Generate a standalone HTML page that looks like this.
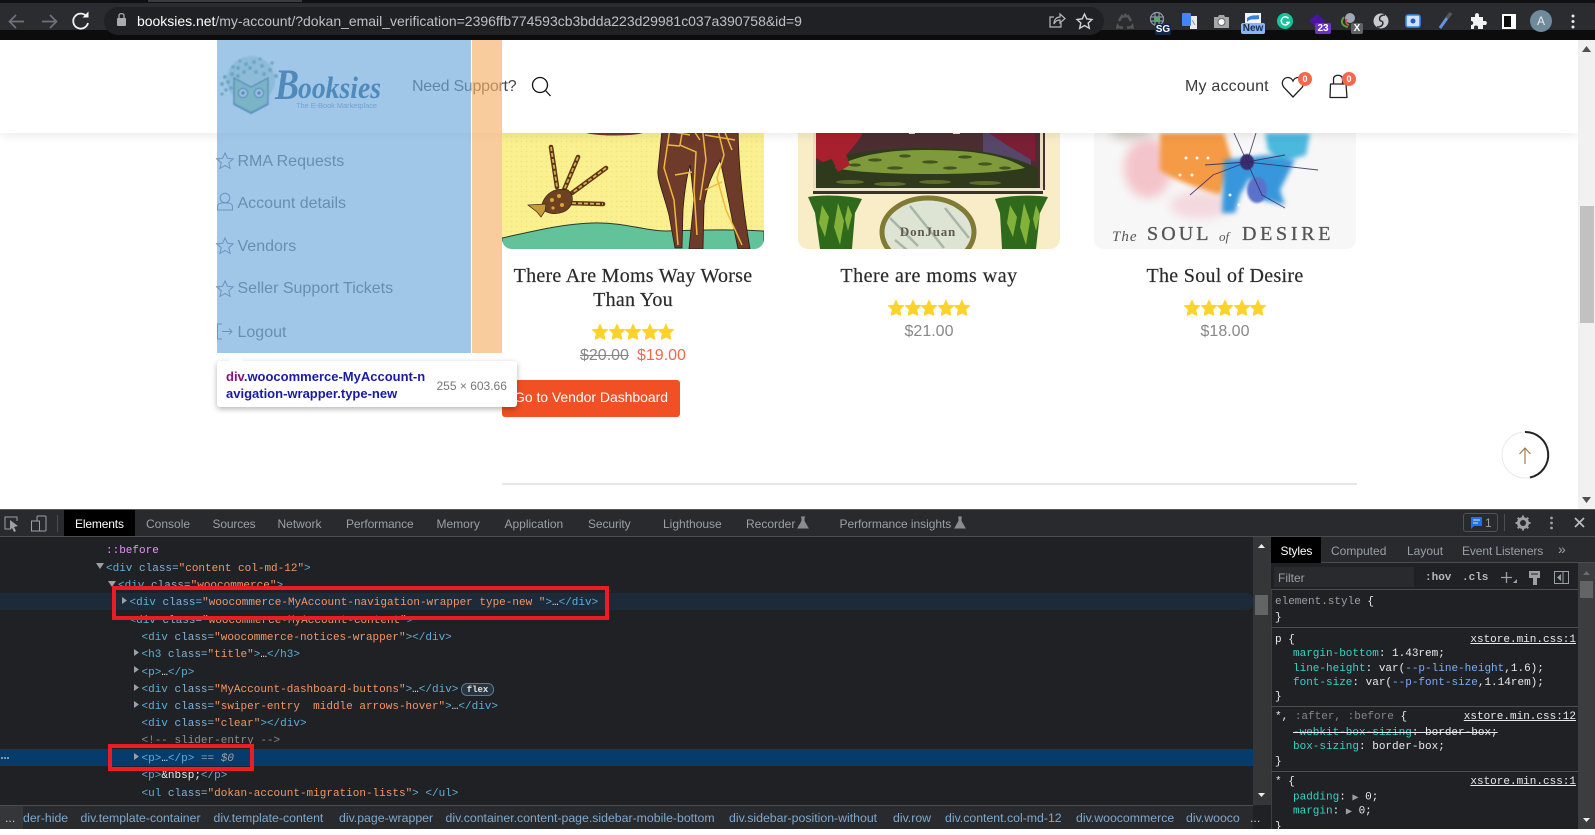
<!DOCTYPE html>
<html lang="en"><head><meta charset="utf-8"><title>booksies.net my-account</title>
<style>
*{box-sizing:border-box}
html,body{margin:0;padding:0;width:1595px;height:829px;overflow:hidden;background:#fff;font-family:"Liberation Sans",sans-serif}
.x{position:absolute;white-space:pre;line-height:16px;transform:translateY(-50%)}
.c{transform:translate(-50%,-50%);text-align:center}
.b{position:absolute}
svg{position:absolute;overflow:visible}
.m{font-family:"Liberation Mono",monospace;font-size:11px;white-space:pre;margin-top:1.3px}
.t{color:#5db0d7}.a{color:#7fb3d9}.v{color:#f29766}
.tab{font-size:12px;color:#9aa0a6}
.s{font-family:"Liberation Mono",monospace;font-size:11px;color:#e8eaed;margin-top:1.7px}
.p{color:#35d4c7}
.l{text-decoration:underline}
.bc{font-size:12.3px;color:#7fa9cd}
.title{font-family:"Liberation Serif",serif;font-size:20px;color:#2b2b2b;letter-spacing:.25px;-webkit-text-stroke:.2px #2b2b2b}
.pr{font-size:16px;color:#888;margin-top:1px}
.menu{font-size:16px;color:#585858;margin-top:1px}
.badge{position:absolute;width:14px;height:14px;border-radius:50%;background:#f4694c;color:#fff;font-size:9px;font-weight:bold;text-align:center;line-height:14px}
.ext{position:absolute;border-radius:2px;color:#fff;font-size:10px;font-weight:bold;text-align:center;line-height:11px;height:11px}
</style></head><body>

<!-- PAGE -->
<div class="b" style="left:0;top:40px;width:1578px;height:469px;background:#fff"></div>

<!-- product images -->
<svg style="left:0;top:0" width="1595" height="829" viewBox="0 0 1595 829">
<defs>
<clipPath id="c1"><path d="M502 120H764V239a10 10 0 0 1-10 10H512a10 10 0 0 1-10-10Z"/></clipPath>
<clipPath id="c2"><path d="M798 120H1060V239a10 10 0 0 1-10 10H808a10 10 0 0 1-10-10Z"/></clipPath>
<clipPath id="c3"><path d="M1094 120H1356V239a10 10 0 0 1-10 10H1104a10 10 0 0 1-10-10Z"/></clipPath>
<filter id="bl2" x="-30%" y="-30%" width="160%" height="160%"><feGaussianBlur stdDeviation="2.500"/></filter>
<filter id="bl4" x="-50%" y="-50%" width="200%" height="200%"><feGaussianBlur stdDeviation="5"/></filter>
<filter id="bl1"><feGaussianBlur stdDeviation="1"/></filter>
<filter id="bl05"><feGaussianBlur stdDeviation=".5"/></filter>
<pattern id="dots" width="5" height="5" patternUnits="userSpaceOnUse"><circle cx="1.500" cy="1.500" r=".8" fill="#e8d86e"/></pattern>
</defs>

<!-- giraffe -->
<g clip-path="url(#c1)">
<rect x="502" y="120" width="262" height="130" fill="#faf08f"/>
<rect x="502" y="120" width="262" height="130" fill="url(#dots)" opacity=".6"/>
<path d="M502 238C530 232 560 224 592 223C625 222 645 231 665 231C700 230 730 229 764 231V250H502Z" fill="#62c29a" stroke="#2b3a2a" stroke-width="1"/>
<!-- big giraffe -->
<path d="M560 120C572 134 600 137 630 135C645 134 655 130 660 120Z" fill="#6e3a2a"/>
<path d="M663 120L658 170C657 180 664 195 669 215L675 248L682 248L683 210C685 185 688 172 690 165L694 200L689 249L703 249L704 205C708 178 716 170 720 160C726 185 732 220 738 249L750 249C745 220 738 170 738 120Z" fill="#6e3a2a" stroke="#2a1a12" stroke-width=".8"/>
<g fill="none" stroke="#efb93e" stroke-width="1.500">
<path d="M670 128L664 168L674 200L678 245"/><path d="M684 122L680 145L696 152L694 190L697 235"/><path d="M702 125L706 160L700 200"/><path d="M716 122L724 155L717 178L726 210L742 245"/><path d="M668 145L680 146M675 175L692 172M705 190L722 182M650 128L690 135M705 135L735 140M690 125L700 140M724 130L732 150"/>
</g>
<!-- baby giraffe -->
<g fill="none" stroke="#5a3518" stroke-width="4.600" stroke-linecap="round"><path d="M551 147L557 187"/><path d="M578 157L564 190"/><path d="M606 168L572 193"/><path d="M566 203L603 204"/></g>
<g fill="none" stroke="#dcae46" stroke-width="1.800" stroke-dasharray="4 2"><path d="M551 147L557 187"/><path d="M578 157L564 190"/><path d="M606 168L572 193"/><path d="M566 203L603 204"/></g>
<path d="M541 208C544 193 555 187 568 190C576 197 572 209 563 212C555 215 547 214 541 208Z" fill="#6e4220" stroke="#3a2413" stroke-width=".7"/>
<g fill="#d9a43a"><circle cx="552" cy="200" r="2"/><circle cx="559" cy="196" r="2"/><circle cx="562" cy="205" r="2"/><circle cx="553" cy="208" r="1.600"/></g>
<path d="M546 204L528 205L537 212L541 217L545 211Z" fill="#c79a3c" stroke="#3a2413" stroke-width=".7"/>
</g>

<!-- Don Juan -->
<g clip-path="url(#c2)">
<rect x="798" y="120" width="262" height="130" fill="#f9edc8"/>
<rect x="813" y="120" width="232" height="70" fill="#4c2e32"/>
<rect x="983" y="120" width="48" height="45" fill="#55466a"/>
<path d="M816 120H868C862 140 850 150 842 160L835 170C828 165 820 160 816 158Z" fill="#a8202e"/>
<path d="M985 120H1035V162C1018 152 998 140 985 130Z" fill="#7a1f35"/>
<path d="M816 190V165C850 150 890 148 925 148C965 148 1005 152 1038 168V190Z" fill="#2f3a1c"/>
<path d="M835 168C860 152 900 150 925 150C960 150 1000 152 1025 168C990 176 870 176 835 168Z" fill="#7f9a3a"/>
<g fill="#3a4a1e" opacity=".85"><ellipse cx="855" cy="165" rx="6" ry="1.600"/><ellipse cx="875" cy="160" rx="7" ry="1.600"/><ellipse cx="895" cy="168" rx="8" ry="1.600"/><ellipse cx="905" cy="156" rx="6" ry="1.600"/><ellipse cx="930" cy="162" rx="8" ry="1.600"/><ellipse cx="950" cy="168" rx="7" ry="1.600"/><ellipse cx="965" cy="157" rx="7" ry="1.600"/><ellipse cx="985" cy="164" rx="7" ry="1.600"/><ellipse cx="1005" cy="168" rx="6" ry="1.600"/></g>
<g fill="#5d6d2c"><ellipse cx="850" cy="182" rx="14" ry="2"/><ellipse cx="890" cy="184" rx="16" ry="2"/><ellipse cx="935" cy="182" rx="16" ry="2"/><ellipse cx="985" cy="183" rx="16" ry="2"/></g>
<path d="M865 120h16l-8 12ZM905 120h8l2 14h-6ZM950 120h8l2 14h-7Z" fill="#e8dfd0"/>
<path d="M840 140L850 165L838 172L830 155Z" fill="#a8202e"/>
<rect x="813" y="120" width="3" height="68" fill="#e9dfc0"/><rect x="1040" y="120" width="3" height="68" fill="#e9dfc0"/>
<rect x="813" y="188" width="230" height="3" fill="#eee6cf"/>
<rect x="813" y="191" width="230" height="3" fill="#3a3328"/>
<path d="M808 197C825 194 850 196 862 199L855 213L852 249H820L815 213Z" fill="#2f6a1c"/>
<path d="M995 199C1010 195 1035 195 1048 197L1040 213L1036 249H1002L1000 213Z" fill="#2f6a1c"/>
<g fill="#93bd3e" opacity=".85"><path d="M822 205l7 12-4 20-6-14ZM838 203l6 18-4 24-6-18ZM848 205l4 10-4 16-3-12ZM1010 205l7 12-4 20-6-14ZM1024 203l6 18-4 24-6-18ZM1036 205l4 10-4 16-3-12Z"/></g>
<ellipse cx="928" cy="232" rx="46" ry="34" fill="#dde4d4" stroke="#7f7a34" stroke-width="5"/>
<path d="M890 218l28 28M910 206l34 42M945 208l24 30M895 240l12 10" stroke="#a8b5a8" stroke-width="2.500"/>
<text x="928" y="236" text-anchor="middle" font-family="Liberation Serif,serif" font-size="13" font-weight="bold" fill="#5e5a4c" letter-spacing=".8">DonJuan</text>
</g>

<!-- Soul of desire -->
<g clip-path="url(#c3)">
<rect x="1094" y="120" width="262" height="130" fill="#f7f7f7"/>
<ellipse cx="1148" cy="168" rx="24" ry="30" fill="#f3bcc2" filter="url(#bl4)" opacity=".85"/>
<ellipse cx="1130" cy="132" rx="20" ry="8" fill="#d8cfc8" filter="url(#bl4)"/>
<ellipse cx="1200" cy="205" rx="30" ry="14" fill="#f3ccd4" filter="url(#bl4)" opacity=".7"/>
<path d="M1160 133H1224L1232 160L1220 195C1205 190 1172 180 1160 170Z" fill="#f59a44" filter="url(#bl2)"/>
<path d="M1265 133H1310L1306 155L1280 163L1268 150Z" fill="#4bb8de" filter="url(#bl2)"/>
<path d="M1224 160L1268 155L1295 160L1280 190L1285 205L1262 200L1250 178L1240 195L1235 213L1222 213Z" fill="#3797dc" filter="url(#bl2)"/>
<ellipse cx="1257" cy="190" rx="10" ry="13" fill="#5a72cc" filter="url(#bl1)"/>
<ellipse cx="1247" cy="162" rx="7" ry="8" fill="#3a2d70" filter="url(#bl05)"/>
<g stroke="#2f2a5e" stroke-width=".9" fill="none" opacity=".85"><path d="M1247 162L1234 133M1247 162L1256 133M1247 162L1285 155M1247 162L1318 170M1247 162L1213 175L1190 195M1247 162L1262 195L1285 208M1247 162L1205 165"/></g>
<g fill="#fff" opacity=".9"><circle cx="1186" cy="158" r="1.500"/><circle cx="1197" cy="158" r="1.500"/><circle cx="1208" cy="158" r="1.500"/><circle cx="1180" cy="175" r="1.500"/><circle cx="1192" cy="175" r="1.500"/><circle cx="1230" cy="195" r="1.500"/><circle cx="1239" cy="205" r="1.500"/></g>
<text x="1112" y="241" font-family="Liberation Serif,serif" font-style="italic" font-size="15" fill="#555" letter-spacing="1">The</text>
<text x="1147" y="240" font-family="Liberation Serif,serif" font-size="20" fill="#555" stroke="#555" stroke-width=".3" letter-spacing="3.100">SOUL</text>
<text x="1219" y="241" font-family="Liberation Serif,serif" font-style="italic" font-size="13" fill="#555">of</text>
<text x="1242" y="240" font-family="Liberation Serif,serif" font-size="20" fill="#555" stroke="#555" stroke-width=".3" letter-spacing="3.700">DESIRE</text>
</g>
</svg>

<!-- titles / prices -->
<div class="x c title" style="left:633px;top:276px">There Are Moms Way Worse</div>
<div class="x c title" style="left:633px;top:300px">Than You</div>
<div class="x c title" style="left:929px;top:276px;letter-spacing:.5px">There are moms way</div>
<div class="x c title" style="left:1225px;top:276px;letter-spacing:.3px">The Soul of Desire</div>

<svg style="left:0;top:0" width="1595" height="829">
<defs><path id="st" d="M0-8L2.300-3L7.900-2.400L3.800 1.500L5 7.200C3.600 7.900 1.400 5.300 0 5.300C-1.400 5.300-3.600 7.900-5 7.200L-3.800 1.500L-7.900-2.400L-2.300-3Z" fill="#fdd22a" stroke="#fdd22a" stroke-width=".6" stroke-linejoin="round"/></defs>
<g><use href="#st" x="600" y="332"/><use href="#st" x="617" y="332"/><use href="#st" x="633" y="332"/><use href="#st" x="650" y="332"/><use href="#st" x="666" y="332"/></g>
<g><use href="#st" x="896" y="308"/><use href="#st" x="913" y="308"/><use href="#st" x="929" y="308"/><use href="#st" x="946" y="308"/><use href="#st" x="962" y="308"/></g>
<g><use href="#st" x="1192" y="308"/><use href="#st" x="1209" y="308"/><use href="#st" x="1225" y="308"/><use href="#st" x="1242" y="308"/><use href="#st" x="1258" y="308"/></g>
</svg>
<div class="x pr" style="left:580px;top:355px;text-decoration:line-through">$20.00</div>
<div class="x pr" style="left:637px;top:355px;color:#f2674c">$19.00</div>
<div class="x c pr" style="left:929px;top:331px">$21.00</div>
<div class="x c pr" style="left:1225px;top:331px">$18.00</div>

<div class="b" style="left:502px;top:380px;width:178px;height:37px;background:#f05023;border-radius:3px"></div>
<div class="x" style="left:514px;top:397px;font-size:14px;color:#fff;letter-spacing:-.04px">Go to Vendor Dashboard</div>

<div class="b" style="left:502px;top:483px;width:855px;height:1.500px;background:#e6e6e6"></div>

<!-- scroll to top -->
<svg style="left:0;top:0" width="1595" height="829">
<circle cx="1525" cy="455" r="23" fill="#fff" stroke="#e9e9e9" stroke-width="1"/>
<path d="M1525 432A23 23 0 0 1 1530 477.500" fill="none" stroke="#222" stroke-width="2"/>
<path d="M1525 464V448M1519.500 454L1525 448L1530.500 454" fill="none" stroke="#a57a4c" stroke-width="1.200"/>
</svg>

<!-- menu items -->
<svg style="left:0;top:0" width="1595" height="829" fill="none" stroke="#5d6f88" stroke-width="1">
<defs><path id="os" d="M0-8L2.400-2.700L8.200-2.100L3.800 1.700L5.100 7.400L0 4.400L-5.100 7.400L-3.800 1.700L-8.200-2.100L-2.400-2.700Z"/></defs>
<use href="#os" x="225" y="161"/><use href="#os" x="225" y="246"/><use href="#os" x="225" y="289"/>
<circle cx="225" cy="198" r="4.800"/><path d="M217.500 210V207C217.500 204 220 203 222 203H228C230 203 232.500 204 232.500 207V210Z"/>
<path d="M222 324H217.500V339H222" stroke="#8a6a3a"/><path d="M222 331.500H232M229 328.500L232 331.500L229 334.500"/>
</svg>
<div class="x menu" style="left:237.500px;top:161px">RMA Requests</div>
<div class="x menu" style="left:237.500px;top:203px">Account details</div>
<div class="x menu" style="left:237.500px;top:246px">Vendors</div>
<div class="x menu" style="left:237.500px;top:288px">Seller Support Tickets</div>
<div class="x menu" style="left:237.500px;top:332px">Logout</div>

<!-- HEADER -->
<div class="b" style="left:0;top:40px;width:1578px;height:93px;background:#fff;box-shadow:0 2px 10px rgba(0,0,0,.09)"></div>
<svg style="left:0;top:0" width="1595" height="829">
<!-- logo -->
<g filter="url(#bl05)">
<circle cx="251" cy="80" r="24" fill="#9cc7a8" opacity=".55"/>
<g fill="#3f8f76" opacity=".75"><circle cx="222" cy="84" r="2"/><circle cx="225" cy="77" r="2"/><circle cx="228" cy="82" r="2"/><circle cx="232" cy="74" r="2.200"/><circle cx="238" cy="68" r="2"/><circle cx="233" cy="67" r="1.800"/><circle cx="246" cy="64" r="2"/><circle cx="254" cy="62" r="2"/><circle cx="262" cy="66" r="2"/><circle cx="270" cy="70" r="2"/><circle cx="276" cy="76" r="2"/><circle cx="272" cy="63" r="1.800"/><circle cx="226" cy="90" r="1.800"/><circle cx="231" cy="88" r="1.800"/><circle cx="244" cy="72" r="2"/><circle cx="256" cy="72" r="2"/><circle cx="250" cy="68" r="2"/><circle cx="264" cy="74" r="2"/><circle cx="238" cy="76" r="2"/><circle cx="222" cy="94" r="1.600"/><circle cx="240" cy="61" r="1.600"/><circle cx="260" cy="59" r="1.600"/></g>
<path d="M234 78L251 87L268 78V104L251 113L234 104Z" fill="#8fc99a" stroke="#2f6488" stroke-width="1.500"/>
<path d="M234 104L251 113L268 104" fill="none" stroke="#2f6488" stroke-width="2"/>
<circle cx="243" cy="93" r="4.500" fill="#fff" stroke="#2f6488" stroke-width="1.500"/><circle cx="243" cy="93" r="2" fill="#1f5478"/>
<circle cx="259" cy="93" r="4.500" fill="#fff" stroke="#2f6488" stroke-width="1.500"/><circle cx="259" cy="93" r="2" fill="#1f5478"/>
</g>
<text x="275" y="99" font-family="Liberation Serif,serif" font-style="italic" font-weight="bold" font-size="43" fill="#12507c" textLength="24" lengthAdjust="spacingAndGlyphs">B</text>
<text x="298" y="98" font-family="Liberation Serif,serif" font-style="italic" font-weight="bold" font-size="31" fill="#12507c" textLength="83" lengthAdjust="spacingAndGlyphs">ooksies</text>
<text x="296" y="108" font-family="Liberation Sans,sans-serif" font-size="7.500" fill="#7e97a8" textLength="81" lengthAdjust="spacingAndGlyphs">The E-Book Marketplace</text>
<!-- search -->
<g fill="none" stroke="#111" stroke-width="1.300"><circle cx="540" cy="85" r="7.500"/><path d="M545.500 90.500L550.500 96"/></g>
<!-- heart -->
<path d="M1293 97L1284 87.500C1280 82 1284 77.500 1288 77.500C1290.500 77.500 1292 79 1293 81C1294 79 1295.500 77.500 1298 77.500C1302 77.500 1306 82 1302 87.500Z" fill="#fff" stroke="#222" stroke-width="1.300"/>
<!-- bag -->
<path d="M1330.500 84H1346L1347 97.500H1330Z" fill="#fff" stroke="#222" stroke-width="1.300" stroke-linejoin="round"/>
<path d="M1333.500 84V79C1333.500 74 1342.500 74 1342.500 79V84" fill="none" stroke="#222" stroke-width="1.300"/>
</svg>
<div class="x" style="left:412px;top:86.500px;font-size:16px;color:#444;letter-spacing:-.25px">Need Support?</div>
<div class="x" style="left:1185px;top:86.500px;font-size:16px;color:#3a3a3a;letter-spacing:.2px">My account</div>
<div class="badge" style="left:1298px;top:72px">0</div>
<div class="badge" style="left:1342px;top:72px">0</div>

<!-- inspector highlight -->
<div class="b" style="left:217px;top:40px;width:254px;height:313px;background:rgba(111,168,220,.66)"></div>
<div class="b" style="left:471px;top:40px;width:1px;height:313px;background:rgba(255,255,255,.6)"></div>
<div class="b" style="left:472px;top:40px;width:30px;height:313px;background:rgba(246,178,107,.66)"></div>

<!-- tooltip -->
<div class="b" style="left:217px;top:361px;width:300px;height:46px;background:#fff;border-radius:3px;box-shadow:0 2px 6px rgba(0,0,0,.3)"></div>
<div class="b" style="left:229px;top:354px;width:0;height:0;border-left:7px solid transparent;border-right:7px solid transparent;border-bottom:7px solid #fff"></div>
<div class="x" style="left:226px;top:376.500px;font-size:13px;font-weight:bold;color:#1a1aa6"><span style="color:#881280">div</span>.woocommerce-MyAccount-n</div>
<div class="x" style="left:226px;top:394px;font-size:13px;font-weight:bold;color:#1a1aa6">avigation-wrapper.type-new</div>
<div class="x" style="left:436.500px;top:386px;font-size:12px;color:#777">255 × 603.66</div>

<!-- page scrollbar -->
<div class="b" style="left:1578px;top:40px;width:17px;height:469px;background:#f1f1f1"></div>
<div class="b" style="left:1580px;top:206px;width:14px;height:117px;background:#c1c1c1"></div>
<svg style="left:0;top:0" width="1595" height="829"><path d="M1586.500 46L1591 52H1582Z" fill="#505050"/><path d="M1586.500 503L1591 497H1582Z" fill="#505050"/></svg>

<!-- CHROME BAR -->
<div class="b" style="left:0;top:0;width:1595px;height:40px;background:#2b2c2f"></div>
<div class="b" style="left:0;top:0;width:1595px;height:2.500px;background:#101012"></div>
<div class="b" style="left:148px;top:0;width:154px;height:2px;background:#3a3b3e"></div>
<div class="b" style="left:0;top:30px;width:1595px;height:10px;background:#0c0c0d"></div>
<div class="b" style="left:104px;top:7px;width:1000px;height:28px;background:#202124;border-radius:14px"></div>
<svg style="left:0;top:0" width="1595" height="42" fill="none">
<g stroke="#6f7276" stroke-width="1.700"><path d="M24 21.500H10M16 15L9.500 21.500L16 28"/><path d="M42 21.500H56M50 15L56.500 21.500L50 28"/></g>
<path d="M87 17A7.500 7.500 0 1 0 88 23" stroke="#f1f3f4" stroke-width="1.800"/><path d="M82.500 17.500H88.500V11.500Z" fill="#f1f3f4"/>
<rect x="117" y="18" width="9" height="8" rx="1" fill="#a8abae"/><path d="M119 18V15.500C119 13 124 13 124 15.500V18" stroke="#a8abae" stroke-width="1.300"/>
<g stroke="#b6b8ba" stroke-width="1.200"><path d="M1054 17H1050V27H1061V23"/><path d="M1054 24C1054 19 1057 17 1060 17V14L1065 18.500L1060 23V20C1057 20 1055.500 21 1054 24Z"/></g>
<path d="M1084.500 14L1086.700 18.800L1092 19.500L1088.200 23L1089.300 28.200L1084.500 25.500L1079.700 28.200L1080.800 23L1077 19.500L1082.300 18.800Z" stroke="#d0d2d4" stroke-width="1.400"/>
<!-- recycle -->
<g stroke="#55575a" stroke-width="2.600"><path d="M1122.500 15L1119 21M1127.500 15L1131 21M1120 27.500H1123M1127 27.500H1130"/></g><path d="M1125 13L1129 17L1122 18ZM1117 23L1121 28L1116 29ZM1133 23L1129 28L1134 29Z" fill="#55575a"/>
<!-- grid globe -->
<circle cx="1157" cy="19" r="6.500" stroke="#8a97a8" stroke-width="1.200"/><path d="M1150 17H1164M1150 21H1164M1155 12V26M1159 12V26" stroke="#8a97a8" stroke-width="1.200"/><rect x="1154" y="17" width="6" height="5" fill="#4fae63"/>
<!-- translate -->
<rect x="1190" y="16" width="7" height="13" fill="#e8eaed"/><rect x="1182" y="13" width="9" height="13" rx="1" fill="#4285f4"/><path d="M1192 20L1195 25" stroke="#8f9296"/>
<!-- camera -->
<path d="M1214 17H1218L1219 15H1224L1225 17H1229V28H1214Z" fill="#a5a7a9"/><circle cx="1221.500" cy="22" r="3.500" fill="#fff" stroke="#66686a"/>
<!-- new s -->
<rect x="1245" y="13" width="16" height="10" fill="#f2f5fb"/><path d="M1247 18C1252 14 1256 16 1259 15V19C1254 20 1250 18 1247 22Z" fill="#3b7fd8"/>
<!-- grammarly -->
<circle cx="1285" cy="21" r="8" fill="#15c39a"/><path d="M1288.500 18.500A4 4 0 1 0 1289 22.500H1286" stroke="#fff" stroke-width="1.500"/>
<!-- diamond -->
<path d="M1317 14L1325 21L1317 28L1309 21Z" fill="#4a14a8"/>
<!-- globe -->
<circle cx="1350" cy="18" r="5" fill="#9ca9b6"/><path d="M1344 17C1340 22 1342 26 1348 27" stroke="#5e9d3c" stroke-width="2"/><path d="M1347 19C1345 22 1346 24 1349 25" stroke="#c6603c" stroke-width="1.500"/>
<!-- S -->
<circle cx="1381" cy="21" r="7.500" fill="#c8cacc"/><path d="M1385 15C1378 15 1379 21 1381 21C1384 21 1384 27 1377 27" stroke="#2b2c2f" stroke-width="1.500"/>
<!-- blue rect -->
<rect x="1406" y="15" width="14" height="12" rx="2" stroke="#3a86ee" stroke-width="1.600" fill="#cfe2fb"/><circle cx="1413" cy="21" r="2.500" fill="#2456c8"/>
<!-- pen -->
<path d="M1440 28L1447 18" stroke="#6b8fe0" stroke-width="3"/><path d="M1447 18L1451 13" stroke="#55575a" stroke-width="3.500"/>
<!-- puzzle -->
<path d="M1471 17H1475V15C1475 12.500 1479 12.500 1479 15V17H1483V21H1485C1487.500 21 1487.500 25 1485 25H1483V29H1478V27C1478 25 1474 25 1474 27V29H1471V25C1474 25 1474 21 1471 21Z" fill="#f1f3f4"/>
<!-- square -->
<rect x="1503" y="15" width="12" height="13" fill="#0c0c0d" stroke="#fff" stroke-width="2"/><rect x="1511" y="15" width="4" height="13" fill="#fff"/>
<circle cx="1541" cy="21" r="11" fill="#6f8a9a"/>
<g fill="#e8eaed"><circle cx="1573" cy="16" r="1.500"/><circle cx="1573" cy="21.500" r="1.500"/><circle cx="1573" cy="27" r="1.500"/></g>
</svg>
<div class="x" style="left:137px;top:21px;font-size:14px;color:#bdc1c6;letter-spacing:-.02px"><span style="color:#fff">booksies.net</span>/my-account/?dokan_email_verification=2396ffb774593cb3bdda223d29981c037a390758&amp;id=9</div>
<div class="x c" style="left:1541px;top:21px;font-size:12px;color:#e8eaed">A</div>
<div class="ext" style="left:1155px;top:24px;width:16px;background:#14284e">SG</div>
<div class="ext" style="left:1241px;top:23px;width:24px;background:#8ab4f8;color:#1a2a44">New</div>
<div class="ext" style="left:1315px;top:23px;width:16px;background:#6a35c4">23</div>
<div class="ext" style="left:1351px;top:23px;width:12px;background:#5f6368">X</div>

<!-- DEVTOOLS -->
<div class="b" style="left:0;top:509px;width:1595px;height:320px;background:#202124"></div>
<div class="b" style="left:0;top:509px;width:1595px;height:1px;background:#55575a"></div>
<div class="b" style="left:0;top:510px;width:1595px;height:26px;background:#292a2d"></div>
<div class="b" style="left:0;top:536px;width:1595px;height:1px;background:#4a4c50"></div>
<div class="b" style="left:64px;top:510px;width:71px;height:26px;background:#000"></div>
<svg style="left:0;top:0" width="1595" height="829" fill="none">
<path d="M10 529H5V517H17V521" stroke="#9aa0a6"/><path d="M10 520L18 526L14 527L16 531L14 532L12 528L10 530Z" fill="#9aa0a6"/>
<rect x="37" y="516" width="9" height="15" stroke="#9aa0a6" rx="1"/><rect x="31.500" y="521" width="8" height="10" fill="#292a2d" stroke="#9aa0a6"/>
<path d="M57.500 515V532" stroke="#4a4c50"/>
<path d="M801 517h4M802 517V521L798 528H808L804 521V517" stroke="#8a8d90" fill="#8a8d90"/>
<path d="M958 517h4M959 517V521L955 528H965L961 521V517" stroke="#8a8d90" fill="#8a8d90"/>
</svg>
<div class="x tab" style="left:75px;top:524px;color:#fff;letter-spacing:-.15px">Elements</div>
<div class="x tab" style="left:146px;top:524px">Console</div>
<div class="x tab" style="left:212.500px;top:524px;letter-spacing:-.15px">Sources</div>
<div class="x tab" style="left:277.500px;top:524px">Network</div>
<div class="x tab" style="left:346px;top:524px;letter-spacing:-.1px">Performance</div>
<div class="x tab" style="left:436.500px;top:524px">Memory</div>
<div class="x tab" style="left:504.500px;top:524px">Application</div>
<div class="x tab" style="left:588px;top:524px;letter-spacing:-.1px">Security</div>
<div class="x tab" style="left:663px;top:524px">Lighthouse</div>
<div class="x tab" style="left:746px;top:524px">Recorder</div>
<div class="x tab" style="left:839.500px;top:524px;letter-spacing:-.05px">Performance insights</div>

<!-- messages / gear -->
<div class="b" style="left:1463px;top:513px;width:35px;height:19px;border:1px solid #4f5256;border-radius:3px"></div>
<svg style="left:0;top:0" width="1595" height="829" fill="none">
<path d="M1471 517H1482V526H1474L1471 529Z" fill="#1a73e8"/><path d="M1473 520H1480M1473 523H1478" stroke="#cfe0fb"/>
<path d="M1504.500 514V531" stroke="#4a4c50"/>
<circle cx="1523" cy="523" r="4.500" stroke="#9aa0a6" stroke-width="3"/><path d="M1523 515.500V518M1523 528V530.500M1515.500 523H1518M1528 523H1530.500M1517.700 517.700L1519.500 519.500M1526.500 526.500L1528.300 528.300M1528.300 517.700L1526.500 519.500M1519.500 526.500L1517.700 528.300" stroke="#9aa0a6" stroke-width="2"/>
<g fill="#9aa0a6"><circle cx="1551.500" cy="518" r="1.400"/><circle cx="1551.500" cy="523" r="1.400"/><circle cx="1551.500" cy="528" r="1.400"/></g>
<path d="M1575 518L1584 527M1584 518L1575 527" stroke="#b8babd" stroke-width="1.800"/>
</svg>
<div class="x" style="left:1485px;top:523px;font-size:12px;color:#9aa0a6">1</div>

<!-- elements panel rows -->
<div class="b" style="left:0;top:593px;width:1253px;height:17px;background:#1d2a3a;border-radius:0 6px 6px 0"></div>
<div class="b" style="left:0;top:749px;width:1253px;height:17px;background:#063c6b"></div>

<div class="x m" style="left:106px;top:550px;color:#e394f5">::before</div>
<div class="x m" style="left:106px;top:567.300px"><span class="t">&lt;div</span> <span class="a">class=</span><span class="v">"content col-md-12"</span><span class="t">&gt;</span></div>
<div class="x m" style="left:118px;top:584.600px"><span class="t">&lt;div</span> <span class="a">class=</span><span class="v">"woocommerce"</span><span class="t">&gt;</span></div>
<div class="x m" style="left:129.500px;top:601.900px"><span class="t">&lt;div</span> <span class="a">class=</span><span class="v">"woocommerce-MyAccount-navigation-wrapper type-new "</span><span class="t">&gt;</span><span style="color:#e8eaed">…</span><span class="t">&lt;/div&gt;</span></div>
<div class="x m" style="left:129.500px;top:619.500px"><span class="t">&lt;div</span> <span class="a">class=</span><span class="v">"woocommerce-MyAccount-content"</span><span class="t">&gt;</span></div>
<div class="x m" style="left:141.500px;top:636.800px"><span class="t">&lt;div</span> <span class="a">class=</span><span class="v">"woocommerce-notices-wrapper"</span><span class="t">&gt;&lt;/div&gt;</span></div>
<div class="x m" style="left:141.500px;top:654px"><span class="t">&lt;h3</span> <span class="a">class=</span><span class="v">"title"</span><span class="t">&gt;</span><span style="color:#e8eaed">…</span><span class="t">&lt;/h3&gt;</span></div>
<div class="x m" style="left:141.500px;top:671.500px"><span class="t">&lt;p&gt;</span><span style="color:#e8eaed">…</span><span class="t">&lt;/p&gt;</span></div>
<div class="x m" style="left:141.500px;top:689px"><span class="t">&lt;div</span> <span class="a">class=</span><span class="v">"MyAccount-dashboard-buttons"</span><span class="t">&gt;</span><span style="color:#e8eaed">…</span><span class="t">&lt;/div&gt;</span></div>
<div class="x m" style="left:141.500px;top:706px"><span class="t">&lt;div</span> <span class="a">class=</span><span class="v">"swiper-entry  middle arrows-hover"</span><span class="t">&gt;</span><span style="color:#e8eaed">…</span><span class="t">&lt;/div&gt;</span></div>
<div class="x m" style="left:141.500px;top:723px"><span class="t">&lt;div</span> <span class="a">class=</span><span class="v">"clear"</span><span class="t">&gt;&lt;/div&gt;</span></div>
<div class="x m" style="left:141.500px;top:740px;color:#8a8d90">&lt;!-- slider-entry --&gt;</div>
<div class="x m" style="left:141.500px;top:758px"><span class="t">&lt;p&gt;</span><span style="color:#e8eaed">…</span><span class="t">&lt;/p&gt;</span> <span style="color:#9aa0a6">==</span> <span style="color:#9aa0a6;font-style:italic">$0</span></div>
<div class="x m" style="left:141.500px;top:775px"><span class="t">&lt;p&gt;</span><span style="color:#e8eaed">&amp;nbsp;</span><span class="t">&lt;/p&gt;</span></div>
<div class="x m" style="left:141.500px;top:792.300px"><span class="t">&lt;ul</span> <span class="a">class=</span><span class="v">"dokan-account-migration-lists"</span><span class="t">&gt; &lt;/ul&gt;</span></div>

<!-- flex badge -->
<div class="b" style="left:461px;top:683px;width:33px;height:13px;border:1px solid #5a7a94;border-radius:6px;background:#263540"></div>
<div class="x c" style="left:477.500px;top:689.500px;font-family:'Liberation Mono',monospace;font-size:9px;font-weight:bold;color:#dfe3e6">flex</div>

<!-- arrows -->
<svg style="left:0;top:0" width="1595" height="829" fill="#9aa0a6">
<path d="M96 563H104L100 569Z"/><path d="M108 581H116L112 587Z"/>
<path d="M122 597V604L127 600.500Z"/><path d="M134 649V656L139 652.500Z"/><path d="M134 666V673L139 669.500Z"/><path d="M134 684V691L139 687.500Z"/><path d="M134 701V708L139 704.500Z"/><path d="M134 753V760L139 756.500Z"/>
<g fill="#b0b3b6"><circle cx="2" cy="758" r="1"/><circle cx="5" cy="758" r="1"/><circle cx="8" cy="758" r="1"/></g>
</svg>

<!-- red boxes -->
<div class="b" style="left:112px;top:586px;width:497px;height:34px;border:4px solid #ed1c24"></div>
<div class="b" style="left:108px;top:744px;width:146px;height:27px;border:4px solid #ed1c24"></div>

<!-- breadcrumbs -->
<div class="b" style="left:0;top:805px;width:1253px;height:24px;background:#292a2d;border-top:1px solid #4a4c50"></div>
<div class="b" style="left:0;top:806px;width:23px;height:23px;background:#34363a"></div>
<div class="x bc" style="left:5px;top:817.500px;color:#c8cacc">...</div>
<div class="x bc" style="left:23px;top:817.500px">der-hide</div>
<div class="x bc" style="left:80.500px;top:817.500px">div.template-container</div>
<div class="x bc" style="left:213.500px;top:817.500px">div.template-content</div>
<div class="x bc" style="left:339px;top:817.500px">div.page-wrapper</div>
<div class="x bc" style="left:445.500px;top:817.500px">div.container.content-page.sidebar-mobile-bottom</div>
<div class="x bc" style="left:729px;top:817.500px">div.sidebar-position-without</div>
<div class="x bc" style="left:893px;top:817.500px">div.row</div>
<div class="x bc" style="left:945px;top:817.500px">div.content.col-md-12</div>
<div class="x bc" style="left:1076px;top:817.500px">div.woocommerce</div>
<div class="x bc" style="left:1186px;top:817.500px">div.wooco</div>
<div class="b" style="left:1242px;top:806px;width:11px;height:23px;background:#292a2d"></div>
<div class="x bc" style="left:1250px;top:817.500px;color:#c8cacc">...</div>

<!-- elements scroll column -->
<div class="b" style="left:1253px;top:537px;width:18px;height:268px;background:#353638"></div>
<div class="b" style="left:1255px;top:595px;width:13px;height:20px;background:#626466"></div>
<svg style="left:0;top:0" width="1595" height="829" fill="#eceef0"><path d="M1261.500 544L1265 548H1258Z"/><path d="M1261.500 797L1265 793H1258Z"/></svg>

<!-- STYLES PANEL -->
<div class="b" style="left:1271px;top:537px;width:324px;height:292px;background:#202124;border-left:1px solid #3c3f43"></div>
<div class="b" style="left:1271px;top:537px;width:324px;height:26px;background:#292a2d;border-bottom:1px solid #4a4c50"></div>
<div class="b" style="left:1271px;top:537px;width:50px;height:26px;background:#000"></div>
<div class="x tab" style="left:1280.500px;top:551px;color:#fff;letter-spacing:-.15px">Styles</div>
<div class="x tab" style="left:1331px;top:551px">Computed</div>
<div class="x tab" style="left:1407px;top:551px">Layout</div>
<div class="x tab" style="left:1462px;top:551px;letter-spacing:-.1px">Event Listeners</div>
<div class="x tab" style="left:1558px;top:549px;font-size:14px">»</div>

<div class="b" style="left:1271px;top:563px;width:307px;height:27px;background:#202124;border-bottom:1px solid #4a4c50"></div>
<div class="b" style="left:1274px;top:567px;width:140px;height:20px;background:#292a2d"></div>
<div class="x tab" style="left:1278px;top:577.500px">Filter</div>
<div class="x s" style="left:1425px;top:576px;color:#b5b8bb;font-weight:bold">:hov</div>
<div class="x s" style="left:1462px;top:576px;color:#b5b8bb;font-weight:bold">.cls</div>
<svg style="left:0;top:0" width="1595" height="829" fill="none" stroke="#9aa0a6">
<path d="M1501 577.500H1512M1506.500 572V583" stroke-width="1.300"/><path d="M1517 579L1513 583H1517Z" fill="#9aa0a6" stroke="none"/>
<rect x="1529" y="571" width="11" height="7" fill="#9aa0a6" stroke="none"/><path d="M1531 574H1538" stroke="#202124"/><rect x="1533" y="578" width="4" height="7" fill="#9aa0a6" stroke="none"/>
<rect x="1554.500" y="571.500" width="14" height="12"/><path d="M1563 572V583"/><path d="M1561 574V581L1557 577.500Z" fill="#9aa0a6" stroke="none"/>
</svg>

<div class="x s" style="left:1275px;top:600px"><span style="color:#9aa0a6">element.style</span> {</div>
<div class="x s" style="left:1275px;top:616.500px">}</div>
<div class="b" style="left:1271px;top:627px;width:307px;height:1px;background:#4a4c50"></div>
<div class="x s" style="left:1275px;top:638px">p {</div>
<div class="x s l" style="right:19px;top:638px">xstore.min.css:1</div>
<div class="x s" style="left:1293px;top:652px"><span class="p">margin-bottom</span>: 1.43rem;</div>
<div class="x s" style="left:1293px;top:667px"><span class="p">line-height</span>: var(<span style="color:#7cacf8">--p-line-height</span>,1.6);</div>
<div class="x s" style="left:1293px;top:681px"><span class="p">font-size</span>: var(<span style="color:#7cacf8">--p-font-size</span>,1.14rem);</div>
<div class="x s" style="left:1275px;top:695px">}</div>
<div class="b" style="left:1271px;top:706px;width:307px;height:1px;background:#4a4c50"></div>
<div class="x s" style="left:1275px;top:715.500px">*, <span style="color:#80868b">:after, :before</span> {</div>
<div class="x s l" style="right:19px;top:715.500px">xstore.min.css:12</div>
<div class="x s" style="left:1293px;top:731px;text-decoration:line-through"><span class="p">-webkit-box-sizing</span>: border-box;</div>
<div class="x s" style="left:1293px;top:745px"><span class="p">box-sizing</span>: border-box;</div>
<div class="x s" style="left:1275px;top:760px">}</div>
<div class="b" style="left:1271px;top:771px;width:307px;height:1px;background:#4a4c50"></div>
<div class="x s" style="left:1275px;top:780px">* {</div>
<div class="x s l" style="right:19px;top:780px">xstore.min.css:1</div>
<div class="x s" style="left:1293px;top:796px"><span class="p">padding</span>: <span style="color:#9aa0a6;font-size:8px">▶</span> 0;</div>
<div class="x s" style="left:1293px;top:810px"><span class="p">margin</span>: <span style="color:#9aa0a6;font-size:8px">▶</span> 0;</div>
<div class="x s" style="left:1275px;top:825px">}</div>

<!-- styles scroll -->
<div class="b" style="left:1578px;top:563px;width:17px;height:266px;background:#3c3d3f"></div>
<div class="b" style="left:1580px;top:581px;width:13px;height:17px;background:#626466"></div>
<svg style="left:0;top:0" width="1595" height="829"><path d="M1586.500 571L1590 575H1583Z" fill="#6a6c6e"/><path d="M1586.500 822L1590 818H1583Z" fill="#eceef0"/></svg>

</body></html>
